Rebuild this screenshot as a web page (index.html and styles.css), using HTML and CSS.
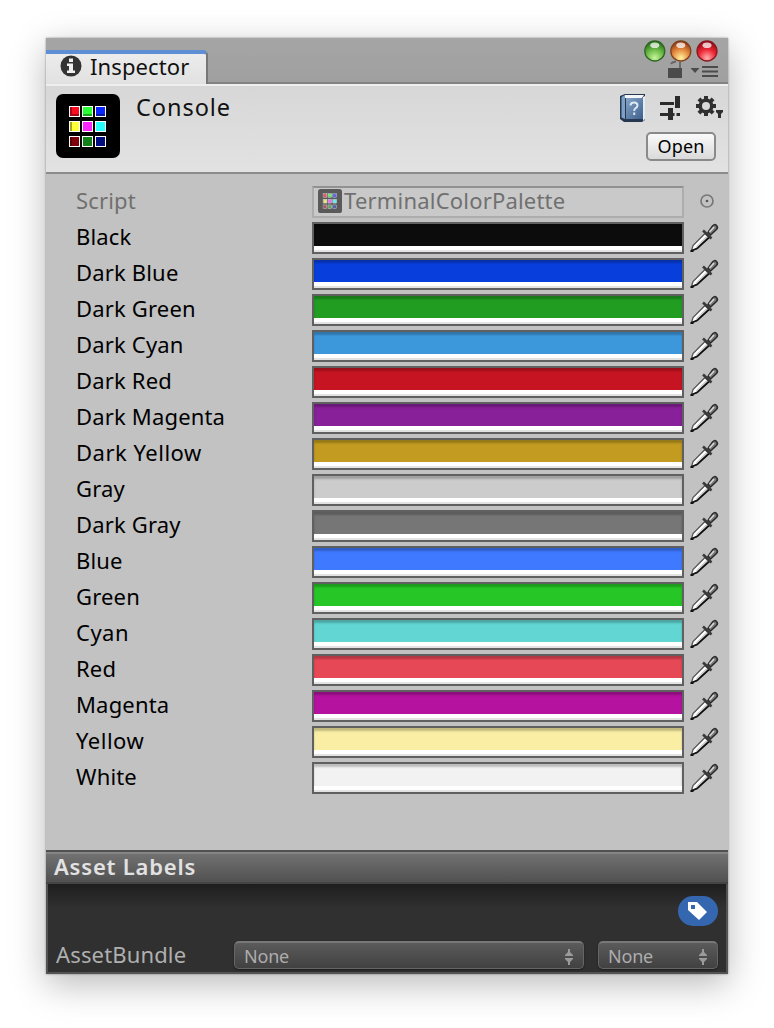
FILE: index.html
```html
<!DOCTYPE html>
<html lang="en">
<head>
<meta charset="utf-8">
<title>Inspector</title>
<link rel="stylesheet" href="styles.css">
</head>
<body>
<svg class="defs" width="0" height="0">
  <defs>
    <radialGradient id="g-green" cx=".5" cy=".85" r=".85"><stop offset="0" stop-color="#c9f59b"/><stop offset=".5" stop-color="#6dbb48"/><stop offset="1" stop-color="#1f6413"/></radialGradient>
    <radialGradient id="g-orange" cx=".5" cy=".85" r=".85"><stop offset="0" stop-color="#fff3a0"/><stop offset=".5" stop-color="#e58b40"/><stop offset="1" stop-color="#8a2c08"/></radialGradient>
    <radialGradient id="g-red" cx=".5" cy=".85" r=".85"><stop offset="0" stop-color="#ffb0b0"/><stop offset=".5" stop-color="#ee2836"/><stop offset="1" stop-color="#85050d"/></radialGradient>
    <linearGradient id="g-book" x1="0" y1="0" x2="1" y2="1"><stop offset="0" stop-color="#85a3c6"/><stop offset="1" stop-color="#3d608c"/></linearGradient>
    <symbol id="palette" viewBox="0 0 64 64">
      <rect width="64" height="64" rx="7"/>
      <g stroke="#fff" stroke-width="1">
        <rect x="13.5" y="12.5" width="10" height="10" fill="#ff0c22"/><rect x="26.500" y="12.5" width="10" height="10" fill="#2aff35"/><rect x="39.500" y="12.5" width="10" height="10" fill="#0c26ff"/>
        <rect x="13.5" y="27.5" width="10" height="10" fill="#ffff38"/><rect x="26.500" y="27.5" width="10" height="10" fill="#ff25ff"/><rect x="39.500" y="27.5" width="10" height="10" fill="#28ffff"/>
        <rect x="13.5" y="42.5" width="10" height="10" fill="#80000a"/><rect x="26.500" y="42.5" width="10" height="10" fill="#128018"/><rect x="39.500" y="42.5" width="10" height="10" fill="#000d80"/>
      </g>
      <g fill="#000" fill-opacity=".35"><path d="M14 20h9v2h-9zM27 20h9v2h-9zM40 20h9v2h-9zM14 13h2v7h-2zM14 28h2v9h-2zM14 43h2v9h-2z"/></g>
    </symbol>
    <symbol id="dropper" viewBox="0 0 30 32">
      <path d="M2.500 29.500l1.500-5L16 12.500l4 4L8 27.500z" fill="#fff" stroke="#555" stroke-width="1.300"/>
      <path d="M3 29.500l5-2L20.500 16" fill="none" stroke="#111" stroke-width="1.800"/>
      <path d="M7.500 26L18 15.500" stroke="#c4c4c4" stroke-width="1.200"/>
      <path d="M19 11.500L23.500 5q2-2.500 4-.5t0 4L21.500 14z" fill="#777" stroke="#2a2a2a" stroke-width="1.500"/>
      <path d="M14 9.500l8.500 8" stroke="#3a3a3a" stroke-width="2.600"/>
      <path d="M20.500 11l4.500-5" stroke="#d5d5d5" stroke-width="1.800"/>
      <path d="M1.500 30h3" stroke="#111" stroke-width="2"/>
    </symbol>
    <symbol id="arrows" viewBox="0 0 10 16"><path d="M4 0h2v3l3 3v1H1V6l3-3zM4 16h2v-3l3-3V9H1v1l3 3z" fill="#9a9a9a"/></symbol>
  </defs>
</svg>

<main class="window">
  <header class="tabbar">
    <div class="tab">
      <svg class="info" viewBox="0 0 22 22"><circle cx="11" cy="11" r="10.500" fill="#333"/><path d="M9 3.500h4v3.500H9zM7 8.500h6v7h2V18H7v-2.500h2v-4.500H7z" fill="#efefef"/></svg>
      <span class="tab-title">Inspector</span>
    </div>
    <div class="window-tools">
      <svg width="88" height="42" viewBox="0 0 88 42">
        <g stroke-width="1.300">
          <circle cx="14.800" cy="13" r="10" fill="url(#g-green)" stroke="#2d6722"/>
          <circle cx="40.800" cy="13" r="10" fill="url(#g-orange)" stroke="#81401c"/>
          <circle cx="67" cy="13" r="10" fill="url(#g-red)" stroke="#8a1720"/>
        </g>
        <g fill="#fff" fill-opacity=".75"><ellipse cx="14.800" cy="7.300" rx="4.500" ry="2.800"/><ellipse cx="40.800" cy="7.300" rx="4.500" ry="2.800"/><ellipse cx="67" cy="7.300" rx="4.500" ry="2.800"/></g>
        <path d="M28 30h14v10H28z" fill="#4b4b4b"/>
        <path d="M31 26q1-2 5-2.500M40 24v6" fill="none" stroke="#666" stroke-width="1.800"/>
        <path d="M50.500 30h9l-4.500 5zM62 28h16v2H62zM62 32.500h16v2H62zM62 37h16v2H62z" fill="#4b4b4b"/>
      </svg>
    </div>
  </header>

  <section class="asset-header">
    <svg class="asset-icon"><use href="#palette"/></svg>
    <h1 class="asset-name">Console</h1>
    <div class="asset-actions">
      <svg class="action-icons" width="104" height="32" viewBox="0 0 104 32">
        <path d="M0 2l5-2h20v26l-3 2H4l-4-3z" fill="#26384f"/>
        <path d="M1.500 3L5 1v24l-3.500-1.500z" fill="#7da0c8"/>
        <path d="M5 1h19l-2 3H5z" fill="#f3f5f8"/>
        <path d="M6 4h17v21H6z" fill="url(#g-book)"/>
        <path d="M23 3l2-1v23l-2 2z" fill="#e5ebf3"/>
        <path d="M10.500 11.500q0-3 3.500-3t3.500 3q0 1.700-2.300 3-1 .7-1 2.500M14.200 18.500v2.500" fill="none" stroke="#dbe7f3" stroke-width="2"/>
        <path d="M40 8h14v3H40zM55 2h5v12h-5zM40 19h6.500v3H40zM48 14h5v12h-5zM46.500 19h8v3h-8zM56.500 19H60v3h-3.500z" fill="#2b2b2b"/>
        <g transform="translate(86 12)" fill="#303030">
          <g id="teeth"><path d="M-2-10h4v20h-4z"/><path d="M-10-2h20v4h-20z"/></g>
          <use href="#teeth" transform="rotate(45)"/>
          <circle r="7.500"/><circle r="4" fill="#d9d9d9"/>
        </g>
        <path d="M96 16h7v2l-2 2v4h-3v-4l-2-2z" fill="#303030"/>
      </svg>
      <button class="open-button">Open</button>
    </div>
  </section>

  <section class="fields">
    <div class="row script"><span class="label">Script</span><div class="object-field"><svg class="mini-icon"><use href="#palette"/></svg><span class="object-name">TerminalColorPalette</span></div><svg class="picker" viewBox="0 0 16 16"><circle cx="8" cy="8" r="6" fill="none" stroke="#777" stroke-width="1.700"/><circle cx="8" cy="8" r="1.300" fill="#555"/></svg></div>
    <div class="row"><span class="label">Black</span><div class="swatch black"></div><svg class="dropper"><use href="#dropper"/></svg></div>
    <div class="row"><span class="label">Dark Blue</span><div class="swatch dark-blue"></div><svg class="dropper"><use href="#dropper"/></svg></div>
    <div class="row"><span class="label">Dark Green</span><div class="swatch dark-green"></div><svg class="dropper"><use href="#dropper"/></svg></div>
    <div class="row"><span class="label">Dark Cyan</span><div class="swatch dark-cyan"></div><svg class="dropper"><use href="#dropper"/></svg></div>
    <div class="row"><span class="label">Dark Red</span><div class="swatch dark-red"></div><svg class="dropper"><use href="#dropper"/></svg></div>
    <div class="row"><span class="label">Dark Magenta</span><div class="swatch dark-magenta"></div><svg class="dropper"><use href="#dropper"/></svg></div>
    <div class="row"><span class="label wide-text">Dark Yellow</span><div class="swatch dark-yellow"></div><svg class="dropper"><use href="#dropper"/></svg></div>
    <div class="row"><span class="label">Gray</span><div class="swatch gray"></div><svg class="dropper"><use href="#dropper"/></svg></div>
    <div class="row"><span class="label">Dark Gray</span><div class="swatch dark-gray"></div><svg class="dropper"><use href="#dropper"/></svg></div>
    <div class="row"><span class="label">Blue</span><div class="swatch blue"></div><svg class="dropper"><use href="#dropper"/></svg></div>
    <div class="row"><span class="label">Green</span><div class="swatch green"></div><svg class="dropper"><use href="#dropper"/></svg></div>
    <div class="row"><span class="label wide-text">Cyan</span><div class="swatch cyan"></div><svg class="dropper"><use href="#dropper"/></svg></div>
    <div class="row"><span class="label">Red</span><div class="swatch red"></div><svg class="dropper"><use href="#dropper"/></svg></div>
    <div class="row"><span class="label">Magenta</span><div class="swatch magenta"></div><svg class="dropper"><use href="#dropper"/></svg></div>
    <div class="row"><span class="label wide-text">Yellow</span><div class="swatch yellow"></div><svg class="dropper"><use href="#dropper"/></svg></div>
    <div class="row"><span class="label">White</span><div class="swatch white"></div><svg class="dropper"><use href="#dropper"/></svg></div>
  </section>

  <h2 class="labels-title">Asset Labels</h2>
  <section class="labels-panel">
    <div class="tag-button"><svg width="22" height="22" viewBox="0 0 22 22"><path d="M1 2h9l10 10-8 8L1 10zM4 5v4h4V5z" fill="#fff" fill-rule="evenodd"/></svg></div>
    <div class="bundle">
      <span class="bundle-label">AssetBundle</span>
      <div class="dropdown wide"><span>None</span><svg class="arrows"><use href="#arrows"/></svg></div>
      <div class="dropdown"><span>None</span><svg class="arrows"><use href="#arrows"/></svg></div>
    </div>
  </section>
</main>
</body>
</html>
```

FILE: styles.css
```css
* { box-sizing: border-box; }
body { margin: 0; height: 1028px; padding: 38px 46px 54px; overflow: hidden; background: #fff; font: 22px/30px "Noto Sans", sans-serif; color: #111; }
.defs { position: absolute; }
svg { display: block; flex: none; }
.window { display: flex; flex-direction: column; width: 682px; height: 936px; background: #c2c2c2; box-shadow: 0 0 2px rgba(0,0,0,.4), 0 10px 34px rgba(0,0,0,.28); }

.tabbar { display: flex; justify-content: space-between; height: 46px; padding-top: 12px; background: linear-gradient(#a5a5a5, #a0a0a0); border-bottom: 2px solid #828282; }
.tab { display: flex; width: 162px; height: 34px; padding: 5px 0 0 14px; border-top: 4px solid #5e8fd4; border-right: 2px solid #777; border-radius: 0 5px 0 0; background: linear-gradient(#ececec, #e1e1e1); align-items: flex-start; }
.info { width: 22px; height: 22px; margin-top: -4px; }
.tab-title { margin: -8px 0 0 8px; letter-spacing: .1px; }
.window-tools { margin-top: -12px; }

.asset-header { display: flex; height: 90px; padding: 8px 4px 0 10px; background: linear-gradient(#d7d7d7, #e2e2e2); border-top: 2px solid #eee; border-bottom: 2px solid #8b8b8b; }
.asset-icon { width: 64px; height: 64px; }
.asset-name { flex: 1; margin: -2px 0 0 16px; font-size: 23.5px; font-weight: 400; letter-spacing: .95px; }
.asset-actions { display: flex; flex-direction: column; align-items: flex-end; width: 106px; }
.open-button { width: 70px; height: 29px; margin: 6px 8px 0 0; padding: 0 0 2px; border: 2px solid #8a8a8a; border-radius: 5px; background: linear-gradient(#fafafa, #dadada); font: 18px/22px "Noto Sans", sans-serif; letter-spacing: .1px; color: #000; }

.fields { flex: 1; padding-top: 10px; }
.row { display: flex; align-items: center; height: 36px; padding-left: 30px; }
.label { width: 236px; padding-bottom: 4px; letter-spacing: .17px; color: #000; }
.wide-text { letter-spacing: .5px; }
.swatch { width: 372px; height: 32px; border: 2px solid #606060; box-shadow: inset 0 -2px #e2e2e2, inset 0 -6px #fff, inset 0 3px 2px rgba(0,0,0,.22); }
.dropper { width: 30px; height: 32px; margin: 0 0 3px 5px; }
.script .label, .object-field { color: #707070; }
.object-field { display: flex; align-items: center; width: 372px; height: 32px; padding-left: 4px; border: 2px solid #adadad; border-top-color: #919191; background: #c9c9c9; letter-spacing: .2px; }
.object-name { padding-bottom: 4px; }
.mini-icon { width: 24px; height: 24px; margin: 0 2px 2px 0; opacity: .55; }
.picker { width: 16px; height: 16px; margin: 0 0 2px 15px; }

.black { background: #0c0c0c; }
.dark-blue { background: #083edb; }
.dark-green { background: #219d21; }
.dark-cyan { background: #3d98db; }
.dark-red { background: #c61422; }
.dark-magenta { background: #882099; }
.dark-yellow { background: #c29b20; }
.gray { background: #cccccc; }
.dark-gray { background: #767676; }
.blue { background: #3e79ff; }
.green { background: #26c626; }
.cyan { background: #62d6d3; }
.red { background: #e74856; }
.magenta { background: #b4129f; }
.yellow { background: #f9eea4; }
.white { background: #f2f2f2; }

.labels-title { height: 34px; margin: 0; padding: 0 8px; border-top: 2px solid #515151; border-bottom: 2px solid #444; background: linear-gradient(#858585 0 2px, #717171 2px, #515151); font-size: 22px; line-height: 28px; font-weight: 600; letter-spacing: .8px; color: #e2e2e2; }
.labels-panel { display: flex; flex-direction: column; height: 90px; padding: 12px 8px 0 8px; border: 2px solid #535353; border-top: 0; background: linear-gradient(#1e1e1e, #303030 24px); }
.tag-button { display: flex; align-items: center; justify-content: center; align-self: flex-end; width: 40px; height: 30px; border-radius: 15px; background: #3567b1; }
.bundle { display: flex; margin-top: 15px; }
.bundle-label { width: 178px; line-height: 26px; letter-spacing: .15px; color: #afafaf; }
.dropdown { display: flex; align-items: center; justify-content: space-between; width: 120px; height: 28px; padding: 0 9px; border: 1px solid #656565; border-top: 2px solid #787878; border-radius: 5px; background: linear-gradient(#5b5b5b, #414141); box-shadow: 0 1px 2px #1c1c1c; font-size: 18px; line-height: 24px; letter-spacing: -.2px; color: #adadad; }
.wide { width: 350px; margin-right: 14px; }
.arrows { width: 10px; height: 16px; margin-top: 3px; }
```
